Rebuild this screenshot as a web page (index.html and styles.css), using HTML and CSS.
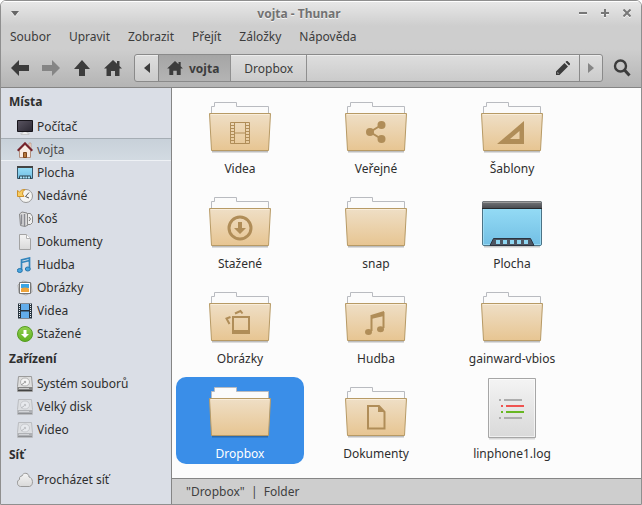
FILE: index.html
```html
<!DOCTYPE html>
<html lang="cs">
<head>
<meta charset="utf-8">
<title>vojta - Thunar</title>
<link rel="stylesheet" href="styles.css">
</head>
<body>
<svg class="defs" width="0" height="0" aria-hidden="true">
  <defs>
    <linearGradient id="tan" x1="0" y1="0" x2="0" y2="1"><stop offset="0" stop-color="#efdfc6"/><stop offset="1" stop-color="#e7c592"/></linearGradient>
    <linearGradient id="sky" x1="0" y1="0" x2="0" y2="1"><stop offset="0" stop-color="#9ae0f8"/><stop offset="1" stop-color="#72bfe4"/></linearGradient>
    <linearGradient id="bar" x1="0" y1="0" x2="0" y2="1"><stop offset="0" stop-color="#777a7d"/><stop offset="1" stop-color="#484a4e"/></linearGradient>
    <linearGradient id="paper" x1="0" y1="0" x2="0" y2="1"><stop offset="0" stop-color="#f4f4f4"/><stop offset="1" stop-color="#d9d9d9"/></linearGradient>
    <linearGradient id="green" x1="0" y1="0" x2="0" y2="1"><stop offset="0" stop-color="#92d050"/><stop offset="1" stop-color="#5fb01f"/></linearGradient>
    <linearGradient id="screen" x1="0" y1="0" x2="1" y2="1"><stop offset="0" stop-color="#5a5562"/><stop offset="1" stop-color="#2a2731"/></linearGradient>
    <symbol id="home" viewBox="0 0 18 16"><path d="M9 0 0 8.500h2.500V16H7v-5h4v5h4.500V8.500H18L15.500 6V1H13v2.700z"/></symbol>
    <symbol id="folder" viewBox="0 0 64 64">
      <path d="M4 55.500h56" stroke="#000" stroke-opacity=".25" stroke-width="2"/>
      <path class="folder-back" d="M3.500 18v-7.500h3v-4h22v4h32V18" fill="#fbfbfb"/>
      <path d="M1.500 17.500h61l-2 37h-57z" fill="url(#tan)" stroke="#b79a65" stroke-linejoin="round"/>
      <path d="M3 18.500h58" stroke="#f9edda"/>
    </symbol>
    <symbol id="disk" viewBox="0 0 16 16">
      <path d="M1.500.5h13l1 10v5H.5v-5z" fill="#dedede" stroke="#9b9b9b"/>
      <path d="M1 11h14v4H1z" fill="#858585"/><path d="M1 14.500h14" stroke="#444"/><path d="M2 12.500h10" stroke="#ccc"/>
      <ellipse cx="8" cy="6" rx="4.500" ry="4" fill="#f5f5f5" stroke="#b5b5b5"/><circle cx="8" cy="6" r="1.200" fill="#aaa"/><path d="m4 9 3-2" stroke="#999"/>
    </symbol>
  </defs>
</svg>
<div class="window">
  <header class="chrome">
    <div class="titlebar">
      <button class="wm" aria-label="Nabídka okna"><svg width="8" height="5"><path d="M0 0h8L4 5z" fill="#666"/></svg></button>
      <h1>vojta - Thunar</h1>
      <div class="controls">
        <button class="wm" aria-label="Minimalizovat"><svg width="8" height="8"><path d="M0 4h8" stroke="#777" stroke-width="2"/></svg></button>
        <button class="wm" aria-label="Maximalizovat"><svg width="8" height="8"><path d="M0 4h8M4 0v8" stroke="#777" stroke-width="2"/></svg></button>
        <button class="wm" aria-label="Zavřít"><svg width="8" height="8"><path d="m.5.500 7 7m0-7-7 7" stroke="#777" stroke-width="2"/></svg></button>
      </div>
    </div>
    <nav class="menubar">
      <button>Soubor</button><button>Upravit</button><button>Zobrazit</button><button>Přejít</button><button>Záložky</button><button>Nápověda</button>
    </nav>
    <div class="toolbar">
      <div class="nav">
        <button aria-label="Zpět"><svg width="18" height="16"><path d="M0 8 8 0v5h10v6H8v5z"/></svg></button>
        <button aria-label="Vpřed" disabled><svg width="18" height="16"><path d="m18 8-8-8v5H0v6h10v5z"/></svg></button>
        <button aria-label="Nahoru"><svg width="18" height="16"><path d="m9 0 8 9h-5v7H6V9H1z"/></svg></button>
        <button aria-label="Domů"><svg width="18" height="16"><use href="#home"/></svg></button>
      </div>
      <div class="location">
        <button class="step" aria-label="Předchozí"><svg width="6" height="10"><path d="M6 0v10L0 5z"/></svg></button>
        <button class="crumb current"><svg width="16" height="14"><use href="#home"/></svg>vojta</button>
        <button class="crumb">Dropbox</button>
        <button class="edit" aria-label="Upravit cestu"><svg width="14" height="14"><path d="M0 14V10.500L8.500 2 12 5.500 3.500 14zM9.500 1l1-1h1L14 2.500v1l-1 1z"/><path d="M1.500 12.500V11l1.500 1.500z" fill="#ddd"/></svg></button>
        <button class="step next" aria-label="Další" disabled><svg width="6" height="10"><path d="M0 0v10l6-5z"/></svg></button>
      </div>
      <button class="search" aria-label="Hledat"><svg width="18" height="18"><circle cx="7.500" cy="7" r="5.500" fill="none" stroke="#3c3c3c" stroke-width="2.400"/><path d="m11.500 11 5 5.500" stroke="#3c3c3c" stroke-width="3"/></svg></button>
    </div>
  </header>
  <div class="body">
    <aside class="sidebar">
      <h2>Místa</h2>
      <a href="#"><svg viewBox="0 0 16 16"><path d="M6 12h4v2h2v1.500H4V14h2z" fill="#eee" stroke="#aaa" stroke-width=".5"/><path d="M.5 1.500h15v11H.5z" fill="url(#screen)" stroke="#17151b"/></svg>Počítač</a>
      <a href="#" class="active" aria-current="page"><svg viewBox="0 0 16 16"><path d="M12 1h2v6h-2z" fill="#f5dfd2" stroke="#aa765e" stroke-width=".5"/><path d="M2.500 8 8 2.500 13.500 8v7.500h-11z" fill="#f8ece4" stroke="#b28e7c"/><path d="m.7 8.800 7.300-7.500 7.300 7.500" fill="none" stroke="#76222b" stroke-width="2"/><path d="M6.500 15.500v-5h3v5z" fill="#b5763c" stroke="#7c461c"/></svg>vojta</a>
      <a href="#"><svg viewBox="0 0 16 16"><path d="M.5 1.500h15v12H.5z" fill="url(#sky)" stroke="#34566a"/><path d="M0 1h16v2H0z" fill="#444"/><path d="m1.500 14 1-3.500h11l1 3.500z" fill="#29404c"/><path d="M3 12.500h10" stroke="#a7e3fa" stroke-width="2" stroke-dasharray="2 .67"/></svg>Plocha</a>
      <a href="#"><svg viewBox="0 0 16 16"><circle cx="9" cy="8" r="6.500" fill="#f5f5f3" stroke="#999"/><path d="m8.500 8.500 3.500-4M8.500 8.500l3.500 1.500" stroke="#555"/><path d="M.5 8.500V2.500L2.500 4q2-3 5.500-2.500-2.500 1.500-2.500 4.500L7 8.500z" fill="#f8ce63" stroke="#cf922b"/></svg>Nedávné</a>
      <a href="#"><svg viewBox="0 0 16 16"><path d="M2.500 3 5 1l5 1 1 2v10l-3 1.500-4.500-1z" fill="#ddd" stroke="#888"/><path d="M4.500 3.500v10M7.500 3v12" stroke="#898a91" stroke-width="1.500"/><path d="M10.500 2.500h3l2 3v6l-2 2h-3z" fill="#eee" stroke="#898989"/><path d="m12 6 1.500 2-1.500 2" fill="none" stroke="#777"/></svg>Koš</a>
      <a href="#"><svg viewBox="0 0 16 16"><path d="M2.500.5h7l4 4v11h-11z" fill="url(#paper)" stroke="#a3a3a3"/><path d="M9.500.5v4h4" fill="#fff" stroke="#b2b2b2"/></svg>Dokumenty</a>
      <a href="#"><svg viewBox="0 0 16 16"><path d="M4.500 13V3l8-2v10.500M4.500 5.500l8-2" fill="none" stroke="#3285bd" stroke-width="1.700"/><ellipse cx="2.800" cy="13.500" rx="2.500" ry="2" fill="#48a5df" stroke="#2675ac"/><ellipse cx="10.800" cy="12" rx="2.500" ry="2" fill="#48a5df" stroke="#2675ac"/></svg>Hudba</a>
      <a href="#"><svg viewBox="0 0 16 16"><path d="m1 5 5-4 8 2 1 9-6 3-7-2z" fill="#e5e5e5" stroke="#aaa"/><path d="M2.500 2.500h11v11h-11z" fill="#fff" stroke="#777"/><path d="M4 4h8v4H4z" fill="#3aa4e4"/><path d="M4 8.500q4-2 8 0V12H4z" fill="#eda33a"/></svg>Obrázky</a>
      <a href="#"><svg viewBox="0 0 16 16"><path d="M1 .500h14v15H1z" fill="#28343e"/><path d="M4 1h8v6H4zm0 7.500h8V15H4z" fill="#62adeb"/><path d="M2.500 1v14M13.500 1v14" stroke="#e6edf2" stroke-dasharray="1 1"/></svg>Videa</a>
      <a href="#"><svg viewBox="0 0 16 16"><circle cx="8" cy="8" r="7.500" fill="url(#green)" stroke="#559c22"/><path d="M6.500 4h3v4H12L8 12 4 8h2.500z" fill="#fff"/></svg>Stažené</a>
      <h2>Zařízení</h2>
      <a href="#"><svg><use href="#disk"/></svg>Systém souborů</a>
      <a href="#" class="unmounted"><svg><use href="#disk"/></svg>Velký disk</a>
      <a href="#" class="unmounted"><svg><use href="#disk"/></svg>Video</a>
      <h2>Síť</h2>
      <a href="#"><svg viewBox="0 0 16 16"><path d="M3.500 14.500C-.5 14-.5 8.500 2.500 7.500 2 4.500 4 4 5 4c1-4 7-3.500 7 1 4 .5 5 8.500.5 9.500z" fill="url(#paper)" stroke="#999"/></svg>Procházet síť</a>
    </aside>
    <div class="pane">
      <main class="files">
        <button class="file"><svg><use href="#folder"/><path class="line thin" d="M22.500 26.500h19v21h-19zM26.500 26.500v21M37.500 26.500v21M26.500 37h11"/><path class="line thin" d="M22.500 29.500h4m-4 3h4m-4 3h4m-4 3h4m-4 3h4m-4 3h4m11-15h4m-4 3h4m-4 3h4m-4 3h4m-4 3h4m-4 3h4"/></svg><span>Videa</span></button>
        <button class="file"><svg><use href="#folder"/><path class="line" d="m37.500 29-11.500 7 11.500 7"/><g class="solid"><circle cx="37.500" cy="29" r="4"/><circle cx="26" cy="36" r="4"/><circle cx="37.500" cy="43" r="4"/></g></svg><span>Veřejné</span></button>
        <button class="file"><svg><use href="#folder"/><path class="solid" fill-rule="evenodd" d="M17 48 44 25v23zm13-5h9.500v-8z"/></svg><span>Šablony</span></button>
        <button class="file"><svg><use href="#folder"/><circle class="line thick" cx="32" cy="37" r="11"/><path class="solid" d="M30 31h4v6h4l-6 6-6-6h4z"/></svg><span>Stažené</span></button>
        <button class="file"><svg><use href="#folder"/></svg><span>snap</span></button>
        <button class="file"><svg><path d="M4 55.500h56" stroke="#000" stroke-opacity=".2" stroke-width="2"/><rect x="2.500" y="10.500" width="59" height="44" rx="1.500" fill="url(#sky)" stroke="#4b7386"/><path d="M3.500 18v35.500h57V18" fill="none" stroke="#a9e3f8" stroke-opacity=".7"/><path d="M2 17.500V12q0-2 2-2h56q2 0 2 2v5.500z" fill="url(#bar)"/><path d="M3 11.500h58" stroke="#999"/><path d="M2 17.500h60" stroke="#26282b"/><path d="m10 54.500 3.500-7h37l3.500 7z" fill="#4e5662" stroke="#2b333f"/><path d="M16 51h32" stroke="#8fd6f1" stroke-width="4" stroke-dasharray="4 3"/></svg><span>Plocha</span></button>
        <button class="file"><svg><use href="#folder"/><path class="solid" fill-rule="evenodd" d="M24 30h18v18H24zm2 2v12h14V32z"/><path class="line" d="m34.500 27.500-2-2.500-5.500 2.500M22.500 31l-4 1.500 3 5.500"/></svg><span>Obrázky</span></button>
        <button class="file"><svg><use href="#folder"/><path class="solid" d="M27 29l13-4v5l-13 3z"/><path class="line" d="M27.500 29v16M39.500 26v16"/><g class="solid"><ellipse cx="24.500" cy="46" rx="3.500" ry="3"/><ellipse cx="36.500" cy="43.300" rx="3.500" ry="3"/></g></svg><span>Hudba</span></button>
        <button class="file"><svg><use href="#folder"/></svg><span>gainward-vbios</span></button>
        <button class="file selected"><svg><use href="#folder"/></svg><span>Dropbox</span></button>
        <button class="file"><svg><use href="#folder"/><path class="line" d="M24 25h11l5.500 6v16.500H24z"/><path class="solid" d="M34 24v7h7z"/></svg><span>Dokumenty</span></button>
        <button class="file"><svg><path d="M9 57.500h46" stroke="#000" stroke-opacity=".15" stroke-width="2"/><path d="M8.500-2.500h47v59h-47z" fill="url(#paper)" stroke="#a6a6a6"/><path d="M9.500-1.500h45v57h-45z" fill="none" stroke="#fff" stroke-opacity=".6"/><path d="M19 19h2m3 0h18M19 37h2m3 0h18" stroke="#adadad" stroke-width="2"/><path d="M21 25h2m3 0h18" stroke="#ef5350" stroke-width="2"/><path d="M21 31h2m3 0h18" stroke="#68b723" stroke-width="2"/></svg><span>linphone1.log</span></button>
      </main>
      <footer class="status">"Dropbox" &nbsp;|&nbsp; Folder</footer>
    </div>
  </div>
</div>
</body>
</html>
```
FILE: styles.css
```css
* { box-sizing: border-box; }
body {
  margin: 0;
  background: #fff;
  color: #2e2e2e;
  font: 12px/17px "Noto Sans", sans-serif;
}
button {
  margin: 0;
  padding: 0;
  border: 0;
  background: none;
  color: inherit;
  font: inherit;
}
svg { display: block; flex: none; }
.defs { position: absolute; }
.window {
  display: flex;
  flex-direction: column;
  min-height: 100vh;
  border: 1px solid #8f8f8f;
  border-radius: 6px 6px 0 0;
  overflow: hidden;
}
.chrome {
  color: #3c3c3c;
  background: linear-gradient(#e8e8e8, #cecece 25px, #cecece 48px, #b4b4b4);
  border-bottom: 1px solid #858585;
  box-shadow: inset 0 1px #fff;
}
.titlebar {
  display: flex;
  align-items: center;
  height: 24px;
  padding: 0 10px;
}
.titlebar h1 {
  flex: 1;
  margin: 0;
  color: #727272;
  font-size: 12px;
  font-weight: 700;
  text-align: center;
  text-shadow: 0 1px #f4f4f4;
}
.wm { filter: drop-shadow(0 1px #f4f4f4); }
.controls { display: flex; gap: 14px; }
.menubar { display: flex; gap: 18px; height: 26px; padding: 0 9px 4px; }
.toolbar { display: flex; align-items: center; height: 36px; padding: 0 10px 2px; }
.toolbar svg { fill: #3c3c3c; }
.toolbar :disabled svg { fill: #858585; }
.nav { display: flex; gap: 13px; margin-right: 12px; }
.location {
  display: flex;
  flex: 1;
  height: 28px;
  border: 1px solid #8a8a8a;
  border-radius: 3px;
  background: linear-gradient(#dedede, #cbcbcb);
  box-shadow: inset 0 1px #ededed;
}
.location button { display: flex; align-items: center; justify-content: center; }
.step { width: 23px; }
.next { border-left: 1px solid #8a8a8a; }
.crumb { gap: 6px; padding: 0 13px; border-right: 1px solid #8f8f8f; }
.current {
  padding: 0 11px 0 8px;
  border-left: 1px solid #858585;
  background: linear-gradient(#a5a5a5, #b4b4b4);
  font-weight: 700;
}
.location .edit { margin-left: auto; padding: 0 9px; }
.search { margin-left: 10px; }
.body { display: flex; flex: 1; }
.sidebar {
  width: 171px;
  flex: none;
  border-right: 1px solid #858585;
  background: #dadee6;
}
.sidebar h2 { margin: 0; padding: 0 8px; font-size: 12px; line-height: 27px; font-weight: 700; }
.sidebar a {
  display: flex;
  align-items: center;
  gap: 4px;
  height: 23px;
  padding-left: 16px;
  color: inherit;
  text-decoration: none;
}
.sidebar svg { width: 16px; height: 16px; }
.sidebar .active {
  color: #4b4b4b;
  background: linear-gradient(#c7d0d9, #d3dbe2);
  box-shadow: inset 0 1px #a5adb4, inset 0 -1px #eef1f5;
}
.unmounted svg { opacity: .5; }
.pane { display: flex; flex: 1; flex-direction: column; background: #fcfcfc; }
.files {
  display: grid;
  flex: 1;
  grid-template-columns: repeat(auto-fill, 128px);
  align-content: start;
  gap: 8px;
  padding: 4px;
}
.file {
  display: flex;
  flex-direction: column;
  align-items: center;
  padding: 4px 4px 2px;
  border-radius: 10px;
}
.file svg { width: 64px; height: 64px; overflow: visible; }
.folder-back { stroke: #b9bbc0; }
.selected { color: #fff; background: #3a8ee8; }
.line { fill: none; stroke: #b08d58; stroke-width: 2; }
.thin { stroke-width: 1; }
.thick { stroke-width: 3; }
.solid { fill: #b08d58; }
.status {
  height: 26px;
  padding: 0 14px;
  border-top: 1px solid #858585;
  background: #cecece;
  color: #3f3f3f;
  line-height: 25px;
}
```
